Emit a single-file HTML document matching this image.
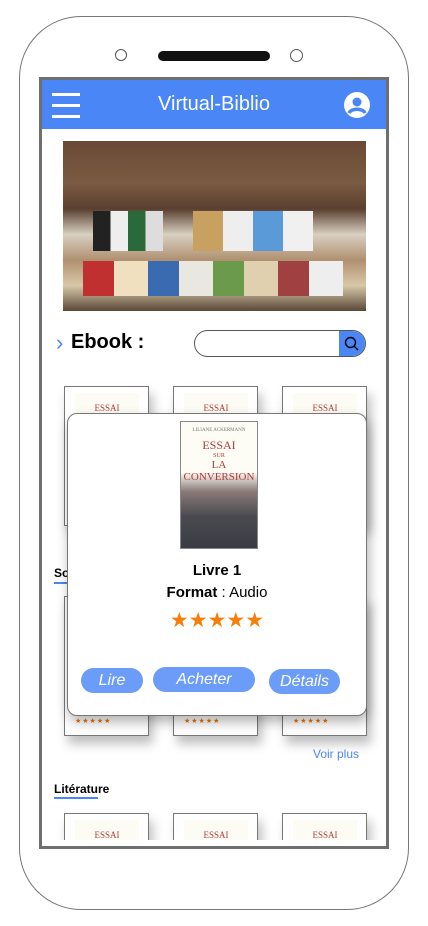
<!DOCTYPE html>
<html><head><meta charset="utf-8"><style>
*{margin:0;padding:0;box-sizing:border-box}
body{width:428px;height:926px;background:#fff;position:relative;overflow:hidden;font-family:"Liberation Sans",sans-serif}
.a{position:absolute}
.phone{left:19px;top:16px;width:390px;height:894px;border:1px solid #777;border-radius:62px}
.screen{left:39px;top:77px;width:350px;height:772px;border:3px solid #6f6f6f;overflow:hidden;background:#fff}
.hdr{left:0;top:0;width:344px;height:49px;background:#4a86f5}
.card{width:85px;height:140px;border:1px solid #777;background:#fff;box-shadow:4px 8px 10px rgba(0,0,0,.25)}
.cv{position:absolute;left:10px;top:6px;width:64px;height:60px;background:#fcfcf4;text-align:center;font-family:"Liberation Serif",serif;color:#b33a3a;font-size:9px;padding-top:10px}
.st{color:#e8750a;font-size:7px;letter-spacing:1px;position:absolute;left:10px;bottom:10px}
.btn{background:#6b9cf7;color:#fff;font-style:italic;font-size:16px;text-align:center;border-radius:13px;height:25px;line-height:25px}
.bk{position:absolute;bottom:0}
</style></head><body>
<div class="a phone"></div>
<div class="a" style="left:115px;top:49px;width:12px;height:12px;border:1px solid #555;border-radius:50%"></div>
<div class="a" style="left:158px;top:51px;width:112px;height:10px;background:#111;border-radius:5px"></div>
<div class="a" style="left:290px;top:49px;width:13px;height:13px;border:1px solid #555;border-radius:50%"></div>
<div class="a screen">
 <div class="a hdr">
  <div class="a" style="left:10px;top:13px;width:28px;height:3px;background:#fff"></div>
  <div class="a" style="left:10px;top:24px;width:28px;height:3px;background:#fff"></div>
  <div class="a" style="left:10px;top:35px;width:28px;height:3px;background:#fff"></div>
  <div class="a" style="left:0;width:344px;top:13px;text-align:center;color:#fff;font-size:20px">Virtual-Biblio</div>
  <svg class="a" style="left:301px;top:11px" width="28" height="28" viewBox="0 0 28 28"><circle cx="14" cy="14" r="13" fill="#fff"/><circle cx="14" cy="11" r="4.5" fill="#4a86f5"/><path d="M6 22c2-5 14-5 16 0" stroke="#4a86f5" stroke-width="3.5" fill="none"/></svg>
 </div>
 <div class="a" style="left:21px;top:61px;width:303px;height:170px;overflow:hidden;background:linear-gradient(180deg,#6a4a35 0%,#7a5a40 25%,#5a4030 40%,#d8d0c0 55%,#b09070 70%,#d8c8a8 85%,#5a4838 100%)">
  <div class="a" style="left:30px;top:70px;width:70px;height:40px;background:linear-gradient(90deg,#222 0 25%,#eee 25% 50%,#2a6a3a 50% 75%,#ddd 75%)"></div>
  <div class="a" style="left:130px;top:70px;width:120px;height:40px;background:linear-gradient(90deg,#c8a060 0 25%,#eee 25% 50%,#5a9ad8 50% 75%,#f0f0f0 75%)"></div>
  <div class="a" style="left:20px;top:120px;width:260px;height:35px;background:linear-gradient(90deg,#c03030 0 12%,#f0e0c0 12% 25%,#3a6ab0 25% 37%,#e8e8e0 37% 50%,#6a9a4a 50% 62%,#e0d0b0 62% 75%,#a04040 75% 87%,#eee 87%)"></div>
 </div>
 <div class="a" style="left:14px;top:250px;color:#4a86f5;font-size:22px">›</div>
 <div class="a" style="left:29px;top:251px;font-size:20px;font-weight:bold">Ebook :</div>
 <div class="a" style="left:152px;top:250px;width:172px;height:27px;border:1px solid #555;border-radius:14px;overflow:hidden"><div class="a" style="right:0;top:0;width:26px;height:27px;background:#4a86f5"></div>
 <svg class="a" style="right:6px;top:5px" width="15" height="15" viewBox="0 0 15 15"><circle cx="6.5" cy="6.5" r="5" stroke="#000" stroke-width="1.4" fill="none"/><path d="M10 10l4 4" stroke="#000" stroke-width="1.4"/></svg></div>
 <div class="a card" style="left:22px;top:306px"><div class="cv">ESSAI</div></div>
 <div class="a card" style="left:131px;top:306px"><div class="cv">ESSAI</div></div>
 <div class="a card" style="left:240px;top:306px"><div class="cv">ESSAI</div></div>
 <div class="a" style="left:12px;top:486px;font-size:12px;font-weight:bold">So</div>
 <div class="a" style="left:12px;top:502px;width:44px;height:2px;background:#4a86f5"></div>
 <div class="a card" style="left:22px;top:516px"><div class="st">★★★★★</div></div>
 <div class="a card" style="left:131px;top:516px"><div class="st">★★★★★</div></div>
 <div class="a card" style="left:240px;top:516px"><div class="st">★★★★★</div></div>
 <div class="a" style="left:271px;top:667px;color:#4a86f5;font-size:12px">Voir plus</div>
 <div class="a" style="left:12px;top:702px;font-size:12px;font-weight:bold">Litérature</div>
 <div class="a" style="left:12px;top:717px;width:44px;height:2px;background:#4a86f5"></div>
 <div class="a card" style="left:22px;top:733px"><div class="cv">ESSAI</div></div>
 <div class="a card" style="left:131px;top:733px"><div class="cv">ESSAI</div></div>
 <div class="a card" style="left:240px;top:733px"><div class="cv">ESSAI</div></div>
 <div class="a" style="left:0;top:760px;width:344px;height:12px;background:#fff"></div>
 <div class="a" style="left:25px;top:333px;width:300px;height:303px;background:#fff;border:1px solid #777;border-radius:10px;box-shadow:2px 6px 12px rgba(0,0,0,.3)">
  <div class="a" style="left:112px;top:7px;width:78px;height:128px;border:1px solid #888;background:linear-gradient(180deg,#fdfdf5 0%,#fdfdf5 40%,#8a7a78 55%,#4a4a50 75%,#3a3c44 100%);text-align:center;font-family:'Liberation Serif',serif;color:#b33a3a">
   <div style="font-size:5px;color:#777;margin-top:6px">LILIANE ACKERMANN</div>
   <div style="font-size:12px;margin-top:5px">ESSAI</div><div style="font-size:6px">SUR</div><div style="font-size:11px">LA CONVERSION</div></div>
  <div class="a" style="left:0;width:298px;top:148px;text-align:center;font-size:15px;font-weight:bold">Livre 1</div>
  <div class="a" style="left:0;width:298px;top:170px;text-align:center;font-size:15px"><b>Format</b> : Audio</div>
  <div class="a" style="left:0;width:298px;top:194px;text-align:center;font-size:21px;color:#f57f0a;letter-spacing:0px">★★★★★</div>
  <div class="a btn" style="left:13px;top:254px;width:62px">Lire</div>
  <div class="a btn" style="left:85px;top:253px;width:102px">Acheter</div>
  <div class="a btn" style="left:201px;top:255px;width:71px">Détails</div>
 </div>
</div>
</body></html>
